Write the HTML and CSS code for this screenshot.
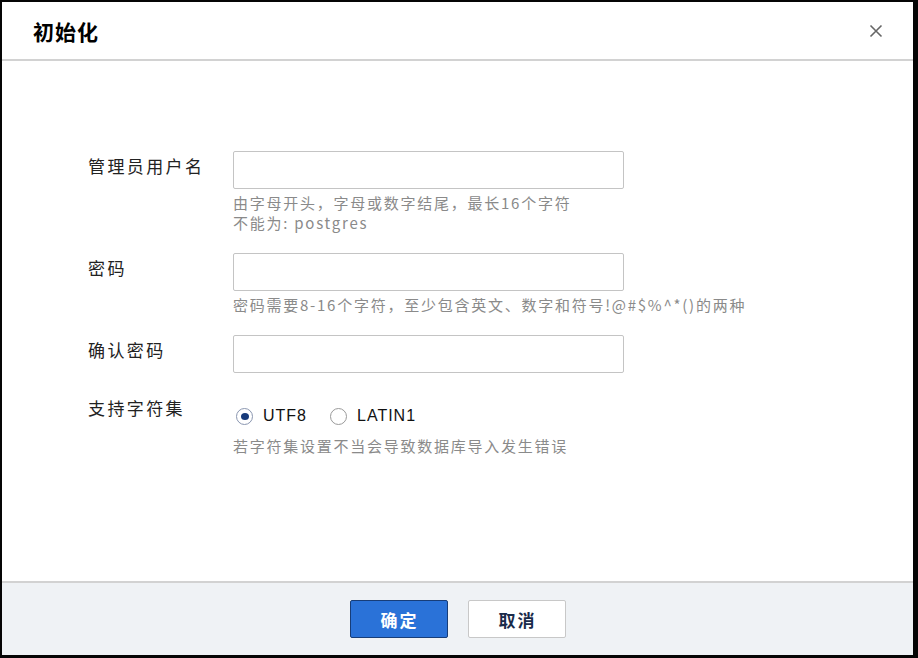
FILE: index.html
```html
<!DOCTYPE html>
<html lang="zh-CN">
<head>
<meta charset="utf-8">
<title>初始化</title>
<link rel="stylesheet" href="styles.css">
</head>
<body>
<div class="dialog">
  <div class="header">
    <div class="title">初始化</div>
    <svg class="close" width="14" height="14" viewBox="0 0 14 14"><path d="M1.5 1.5L12.5 12.5M12.5 1.5L1.5 12.5" stroke="#666" stroke-width="1.6" fill="none"/></svg>
  </div>
  <div class="body">
    <div class="row">
      <div class="label">管理员用户名</div>
      <div class="field">
        <div class="input"></div>
        <div class="hint">由字母开头，字母或数字结尾，最长16个字符</div>
        <div class="hint">不能为: postgres</div>
      </div>
    </div>
    <div class="row">
      <div class="label">密码</div>
      <div class="field">
        <div class="input"></div>
        <div class="hint">密码需要8-16个字符，至少包含英文、数字和符号!@#$%^*()的两种</div>
      </div>
    </div>
    <div class="row">
      <div class="label">确认密码</div>
      <div class="field">
        <div class="input"></div>
      </div>
    </div>
    <div class="row row-charset">
      <div class="label">支持字符集</div>
      <div class="field">
        <div class="radios">
          <span class="radio checked"></span><span class="rtext">UTF8</span>
          <span class="radio second"></span><span class="rtext">LATIN1</span>
        </div>
        <div class="hint hint-charset">若字符集设置不当会导致数据库导入发生错误</div>
      </div>
    </div>
  </div>
  <div class="footer">
    <div class="btn primary">确定</div>
    <div class="btn">取消</div>
  </div>
</div>
</body>
</html>
```
FILE: styles.css
```css
* { box-sizing: border-box; }
html, body { margin: 0; }
body {
  width: 918px;
  height: 658px;
  background: #050505;
  padding: 2px 5px 3px 2px;
  font-family: "Noto Sans CJK SC", "Liberation Sans", sans-serif;
  overflow: hidden;
}
.dialog {
  width: 911px;
  height: 653px;
  background: #fff;
  display: flex;
  flex-direction: column;
}
.header {
  height: 59px;
  border-bottom: 2px solid #d2d2d2;
  display: flex;
  align-items: center;
  justify-content: space-between;
  padding: 0 30px 0 31px;
}
.title {
  font-size: 21px;
  font-weight: bold;
  letter-spacing: 1px;
  color: #000;
  line-height: 28px;
}
.close { display: block; }
.body {
  flex: 1;
  padding: 90px 0 0 86px;
}
.row {
  display: flex;
  margin-bottom: 20px;
}
.row-charset { margin-top: 9px; }
.label {
  width: 145px;
  flex: none;
  font-size: 17px;
  letter-spacing: 2.4px;
  color: #222;
  line-height: 22px;
  padding-top: 4px;
}
.field { display: flex; flex-direction: column; }
.input {
  width: 391px;
  height: 38px;
  border: 1px solid #c4c4c4;
  border-radius: 2px;
  background: #fff;
}
.hint {
  font-size: 15px;
  letter-spacing: 1.75px;
  color: #8a8a8a;
  line-height: 20px;
}
.input + .hint { margin-top: 4px; }
.radios {
  height: 38px;
  margin-top: 4px;
  display: flex;
  align-items: center;
  padding-left: 3px;
}
.radio {
  width: 17px;
  height: 17px;
  border: 1px solid #9a9a9a;
  border-radius: 50%;
  background: #fff;
  display: flex;
  align-items: center;
  justify-content: center;
  flex: none;
}
.radio.checked { border-color: #8a96b0; }
.radio.checked::after {
  content: "";
  width: 8px;
  height: 7px;
  border-radius: 50%;
  background: #173a7a;
}
.radio.second { margin-left: 23px; }
.rtext {
  font-family: "Liberation Sans", sans-serif;
  font-size: 16px;
  letter-spacing: 1px;
  color: #111;
  margin-left: 10px;
}
.hint-charset { margin-top: 1px; }
.footer {
  height: 74px;
  border-top: 2px solid #d2d2d2;
  background: #eff2f5;
  display: flex;
  justify-content: center;
  align-items: flex-start;
  gap: 20px;
  padding-top: 17px;
}
.btn {
  width: 98px;
  height: 38px;
  border: 1px solid #c8c8c8;
  background: #fff;
  border-radius: 2px;
  display: flex;
  align-items: center;
  justify-content: center;
  font-size: 17px;
  letter-spacing: 2px;
  padding-left: 2px;
  color: #1a2b4a;
  font-weight: bold;
}
.btn.primary {
  background: #2a72d8;
  border: 1px solid #173d78;
  color: #fff;
}
```
